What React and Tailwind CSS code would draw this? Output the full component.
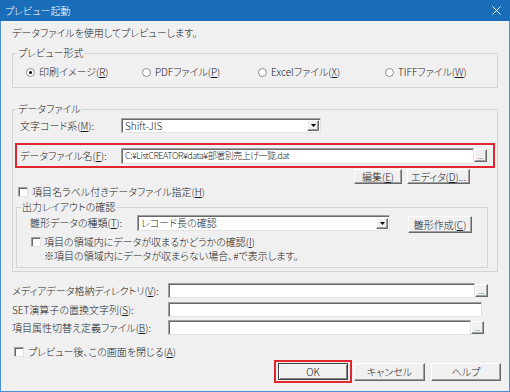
import React from "react";

// ── Estilos clásicos de Windows ───────────────────────────────────────────────
const SUNKEN =
  "bg-white border border-[#a0a0a0] border-r-[#e3e3e3] border-b-[#e3e3e3] shadow-[inset_1px_1px_0_#696969]";
const RAISED =
  "bg-[#f0f0f0] border border-t-white border-l-white border-r-[#696969] border-b-[#696969] shadow-[inset_-1px_-1px_0_#a0a0a0]";

const Key = ({ children }) => <u className="underline-offset-[1px]">{children}</u>;

const Browse = () => (
  <div className={`${RAISED} w-[13px] h-[13px] shrink-0 flex items-end justify-center text-[7px] leading-[7px] pb-[1px]`}>
    ...
  </div>
);

const Arrow = () => (
  <span className={`${RAISED} w-[12px] h-[11px] mr-[1px] shrink-0 flex items-center justify-center`}>
    <svg width="5" height="3" viewBox="0 0 5 3">
      <path d="M0 0h5L2.5 3z" fill="#000" />
    </svg>
  </span>
);

const Checkbox = () => <span className={`${SUNKEN} w-[10px] h-[10px] shrink-0`} />;

const Radio = ({ checked }) => (
  <span className="w-[9px] h-[9px] shrink-0 rounded-full border border-[#8c8c8c] bg-white flex items-center justify-center">
    {checked && <span className="w-[3px] h-[3px] rounded-full bg-black" />}
  </span>
);

const Button = ({ className, children }) => (
  <div className={`${RAISED} shrink-0 flex items-center justify-center whitespace-nowrap ${className}`}>{children}</div>
);

const Legend = ({ children }) => <legend className="ml-[4px] px-[1px] leading-[14px]">{children}</legend>;

const RADIOS = [
  { label: "印刷イメージ(", key: "R", w: "w-[116px]", checked: true },
  { label: "PDFファイル(", key: "P", w: "w-[116px]" },
  { label: "Excelファイル(", key: "X", w: "w-[127px]" },
  { label: "TIFFファイル(", key: "W", w: "w-[100px]" },
];

export default function App() {
  return (
    <div className="w-[510px] h-[392px] flex flex-col bg-[#f0f0f0] text-[#1a1a1a] text-[10px] leading-[14px] font-light whitespace-nowrap font-['Noto_Sans_CJK_JP',sans-serif] [font-feature-settings:'palt'] overflow-hidden">
      {/* Barra de título */}
      <div className="h-[21px] shrink-0 bg-[#1a6db8] text-white flex items-center justify-between pl-[5px] pr-[9px]">
        <span>プレビュー起動</span>
        <svg width="9" height="9" viewBox="0 0 9 9">
          <path d="M0.5 0.5l8 8M8.5 0.5l-8 8" stroke="#fff" strokeWidth="1" />
        </svg>
      </div>

      <div className="flex-1 flex flex-col border-x border-b border-[#4a90d9] px-[11px]">
        <p className="mt-[5px] h-[14px]">データファイルを使用してプレビューします。</p>

        {/* Formato de vista previa */}
        <fieldset className="mt-[6px] h-[42px] border border-[#d5d5d5]">
          <Legend>プレビュー形式</Legend>
          <div className="mt-[4px] h-[16px] flex items-center pl-[13px]">
            {RADIOS.map((r) => (
              <div key={r.key} className={`${r.w} shrink-0 flex items-center gap-[4px]`}>
                <Radio checked={r.checked} />
                <span>
                  {r.label}
                  <Key>{r.key}</Key>)
                </span>
              </div>
            ))}
          </div>
        </fieldset>

        {/* Archivo de datos */}
        <fieldset className="mt-[14px] h-[170px] border border-[#d5d5d5]">
          <Legend>データファイル</Legend>
          <div className="flex flex-col">
            <div className="mt-[2px] h-[15px] flex items-center pl-[7px]">
              <span className="w-[101px] shrink-0">
                文字コード系(<Key>M</Key>):
              </span>
              <div className={`${SUNKEN} w-[200px] h-[15px] flex items-center`}>
                <span className="flex-1 pl-[3px]">Shift-JIS</span>
                <Arrow />
              </div>
            </div>

            <div className="mt-[10px] ml-[2px] w-[480px] h-[25px] border-2 border-[#e0262e] flex items-center pl-[3px]">
              <span className="w-[101px] shrink-0">
                データファイル名(<Key>F</Key>):
              </span>
              <div className={`${SUNKEN} w-[353px] h-[16px] shrink-0 flex items-center pl-[3px] overflow-hidden text-[9px] tracking-[-0.5px]`}>
                C:¥ListCREATOR¥data¥部署別売上げ一覧.dat
              </div>
              <Browse />
            </div>

            <div className="mt-[1px] h-[15px] flex justify-end gap-[5px] pr-[27px]">
              <Button className="w-[48px] h-[15px]">
                編集(<Key>E</Key>)
              </Button>
              <Button className="w-[63px] h-[15px]">
                エディタ(<Key>D</Key>)...
              </Button>
            </div>

            <div className="mt-[1px] h-[14px] flex items-center gap-[4px] pl-[5px]">
              <Checkbox />
              <span>
                項目名ラベル付きデータファイル指定(<Key>H</Key>)
              </span>
            </div>

            {/* Confirmación de diseño */}
            <fieldset className="mt-[1px] ml-[3px] w-[472px] h-[68px] border border-[#d5d5d5]">
              <Legend>出力レイアウトの確認</Legend>
              <div className="mt-[1px] h-[18px] flex items-start pl-[13px]">
                <span className="w-[107px] h-[16px] shrink-0 flex items-center">
                  雛形データの種類(<Key>T</Key>):
                </span>
                <div className={`${SUNKEN} w-[253px] h-[16px] shrink-0 flex items-center`}>
                  <span className="flex-1 pl-[3px]">レコード長の確認</span>
                  <Arrow />
                </div>
                <Button className="ml-[18px] mt-[1px] w-[64px] h-[17px]">
                  雛形作成(<Key>C</Key>)
                </Button>
              </div>
              <div className="mt-[2px] h-[14px] flex items-center gap-[3px] pl-[14px]">
                <Checkbox />
                <span>
                  項目の領域内にデータが収まるかどうかの確認(<Key>I</Key>)
                </span>
              </div>
              <p className="h-[14px] pl-[27px]">※項目の領域内にデータが収まらない場合、#で表示します。</p>
            </fieldset>
          </div>
        </fieldset>

        {/* Campos inferiores */}
        <div className="mt-[11px] h-[15px] flex items-center">
          <span className="w-[156px] shrink-0">
            メディアデータ格納ディレクトリ(<Key>V</Key>):
          </span>
          <div className={`${SUNKEN} w-[307px] h-[15px] shrink-0`} />
          <Browse />
        </div>
        <div className="mt-[4px] h-[15px] flex items-center">
          <span className="w-[156px] shrink-0">
            SET演算子の置換文字列(<Key>S</Key>):
          </span>
          <div className={`${SUNKEN} w-[314px] h-[15px] shrink-0`} />
        </div>
        <div className="mt-[3px] h-[15px] flex items-center">
          <span className="w-[156px] shrink-0">
            項目属性切替え定義ファイル(<Key>B</Key>):
          </span>
          <div className={`${SUNKEN} w-[303px] h-[15px] shrink-0`} />
          <Browse />
        </div>

        <div className="mt-[10px] h-[14px] flex items-center gap-[4px] pl-[2px]">
          <Checkbox />
          <span>
            プレビュー後、この画面を閉じる(<Key>A</Key>)
          </span>
        </div>

        <div className="mt-[1px] flex items-center pl-[262px]">
          <div className="w-[78px] h-[23px] shrink-0 border-2 border-[#e0262e] flex items-center justify-center">
            <div className="w-[70px] h-[17px] flex items-center justify-center bg-[#f0f0f0] border border-[#404040] shadow-[inset_1px_1px_0_#fff,inset_-1px_-1px_0_#808080]">
              OK
            </div>
          </div>
          <Button className="ml-[2px] w-[71px] h-[18px]">キャンセル</Button>
          <Button className="ml-[6px] w-[70px] h-[18px]">ヘルプ</Button>
        </div>
      </div>
    </div>
  );
}
